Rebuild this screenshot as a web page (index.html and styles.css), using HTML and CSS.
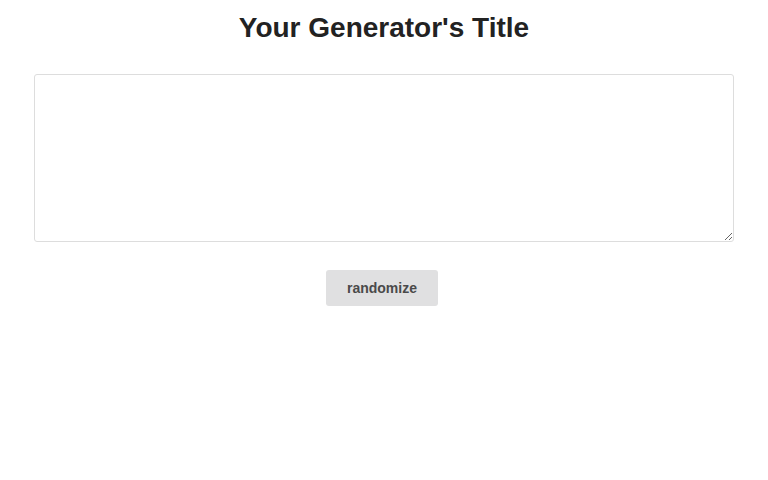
FILE: index.html
```html
<!DOCTYPE html>
<html lang="en">
<head>
    <meta charset="UTF-8">
    <meta name="viewport" content="width=device-width, initial-scale=1.0">
    <title>Generator</title>
    <link rel="stylesheet" href="styles.css">
</head>
<body>
    <div id="generator">
        <h1>Your Generator's Title</h1>
        <textarea id="output"></textarea>
        <button id="randomize-button">randomize</button>
    </div>
</body>
</html>
```

FILE: styles.css
```css
body {
  font-family: "Liberation Sans", Arial, sans-serif;
  background-color: #fff;
  color: #222;
  margin: 0;
  padding: 0;
}

#generator {
  display: flex;
  flex-direction: column;
  align-items: center;
  width: 700px;
  margin: 0 auto;
}

h1 {
  font-size: 28px;
  font-weight: bold;
  margin: 12px 0 0;
  line-height: 32px;
  height: 32px;
}

#output {
  box-sizing: border-box;
  width: 700px;
  height: 168px;
  margin-top: 30px;
  border: 1px solid #ddd;
  border-radius: 3px;
  padding: 6px;
  font-family: inherit;
  font-size: 14px;
}

#randomize-button {
  width: 112px;
  height: 36px;
  margin: 28px 4px 0 0;
  background-color: #e0e0e1;
  color: #4a4a4a;
  border: none;
  border-radius: 3px;
  font-family: inherit;
  font-size: 14px;
  font-weight: bold;
  cursor: pointer;
}

#randomize-button:hover {
  background-color: #d4d4d5;
}
```
